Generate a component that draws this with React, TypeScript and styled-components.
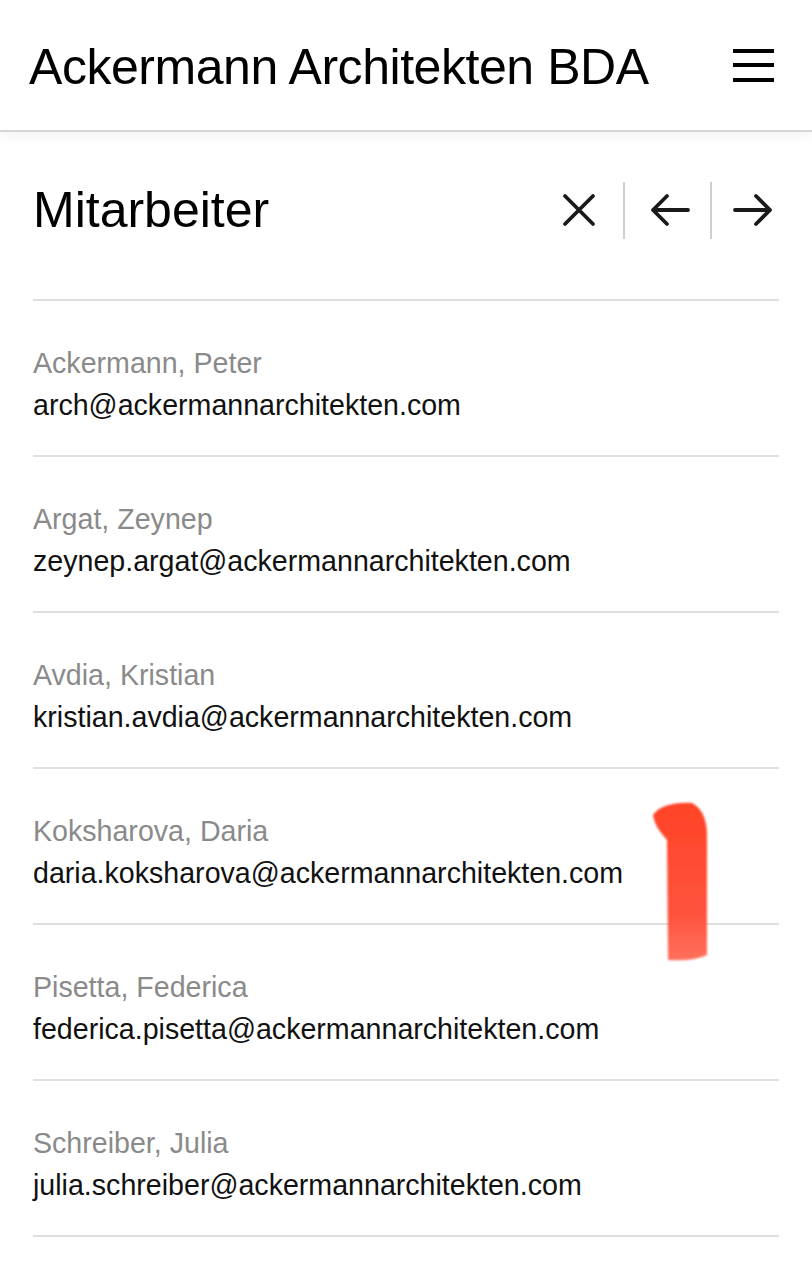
import React from 'react';
import styled, { createGlobalStyle } from 'styled-components';

const GlobalStyle = createGlobalStyle`
  html, body {
    margin: 0;
    padding: 0;
    background: #fff;
  }
  body {
    font-family: 'Liberation Sans', Arial, sans-serif;
    color: #111;
  }
`;

interface Person {
  name: string;
  email: string;
}

const people: Person[] = [
  { name: 'Ackermann, Peter', email: 'arch@ackermannarchitekten.com' },
  { name: 'Argat, Zeynep', email: 'zeynep.argat@ackermannarchitekten.com' },
  { name: 'Avdia, Kristian', email: 'kristian.avdia@ackermannarchitekten.com' },
  { name: 'Koksharova, Daria', email: 'daria.koksharova@ackermannarchitekten.com' },
  { name: 'Pisetta, Federica', email: 'federica.pisetta@ackermannarchitekten.com' },
  { name: 'Schreiber, Julia', email: 'julia.schreiber@ackermannarchitekten.com' },
];

const Page = styled.div`
  position: relative;
  width: 812px;
  min-height: 1280px;
  background: #fff;
  overflow: hidden;
`;

const Header = styled.header`
  height: 130px;
  display: flex;
  align-items: center;
  justify-content: space-between;
  padding: 0 38px 0 29px;
  border-bottom: 2px solid #d6d6d6;
  box-shadow: 0 4px 12px rgba(0, 0, 0, 0.05);
`;

const Brand = styled.h1`
  margin: 4px 0 0;
  font-weight: 400;
  font-size: 50px;
  letter-spacing: -0.45px;
  color: #000;
`;

const Burger = styled.button`
  width: 41px;
  height: 33px;
  padding: 0;
  border: none;
  background: none;
  display: flex;
  flex-direction: column;
  justify-content: space-between;
  span {
    display: block;
    height: 4px;
    background: #000;
  }
`;

const Section = styled.main`
  padding: 48px 33px 0 33px;
`;

const TitleRow = styled.div`
  display: flex;
  align-items: center;
  justify-content: space-between;
  height: 60px;
  margin-bottom: 59px;
`;

const Title = styled.h2`
  margin: 0;
  font-weight: 400;
  font-size: 50px;
  color: #000;
`;

const Controls = styled.div`
  display: flex;
  align-items: center;
  height: 58px;
  margin-right: 6px;
`;

const IconButton = styled.button`
  padding: 0;
  border: none;
  background: none;
  display: flex;
  align-items: center;
  justify-content: center;
  color: #1a1a1a;
`;

const Divider = styled.span<{ $before: number; $after: number }>`
  width: 2px;
  height: 57px;
  background: #cfcfcf;
  margin: 0 ${p => p.$after}px 0 ${p => p.$before}px;
`;

const List = styled.ul`
  list-style: none;
  margin: 0;
  padding: 0;
  border-top: 2px solid #e0e0e0;
  width: 746px;
`;

const Item = styled.li`
  height: 156px;
  box-sizing: border-box;
  padding-top: 44px;
  border-bottom: 2px solid #e0e0e0;
  display: flex;
  flex-direction: column;
  gap: 6px;
`;

const Name = styled.div`
  font-size: 28.6px;
  color: #8a8a8a;
  line-height: 36px;
`;

const Email = styled.div`
  font-size: 28.6px;
  color: #111;
  line-height: 36px;
`;

const Mark = styled.svg`
  position: absolute;
  left: 630px;
  top: 790px;
  width: 100px;
  height: 190px;
  pointer-events: none;
`;

const CloseIcon = () => (
  <svg width="34" height="34" viewBox="0 0 34 34" fill="none">
    <path d="M3 3l28 28M31 3L3 31" stroke="currentColor" strokeWidth="3.8" strokeLinecap="round" />
  </svg>
);

const ArrowIcon: React.FC<{ dir: 'left' | 'right' }> = ({ dir }) => (
  <svg width="40" height="34" viewBox="0 0 40 34" fill="none">
    {dir === 'left' ? (
      <path d="M38 17H3M17 3L3 17l14 14" stroke="currentColor" strokeWidth="3.8" strokeLinecap="round" strokeLinejoin="round" />
    ) : (
      <path d="M2 17h35M23 3l14 14-14 14" stroke="currentColor" strokeWidth="3.8" strokeLinecap="round" strokeLinejoin="round" />
    )}
  </svg>
);

const App: React.FC = () => {
  return (
    <Page>
      <GlobalStyle />
      <Header>
        <Brand>Ackermann Architekten BDA</Brand>
        <Burger aria-label="Menü">
          <span />
          <span />
          <span />
        </Burger>
      </Header>
      <Section>
        <TitleRow>
          <Title>Mitarbeiter</Title>
          <Controls>
            <IconButton aria-label="Schließen"><CloseIcon /></IconButton>
            <Divider $before={27} $after={25} />
            <IconButton aria-label="Zurück"><ArrowIcon dir="left" /></IconButton>
            <Divider $before={20} $after={21} />
            <IconButton aria-label="Weiter"><ArrowIcon dir="right" /></IconButton>
          </Controls>
        </TitleRow>
        <List>
          {people.map(p => (
            <Item key={p.email}>
              <Name>{p.name}</Name>
              <Email>{p.email}</Email>
            </Item>
          ))}
        </List>
      </Section>
      <Mark viewBox="0 0 100 190">
        <defs>
          <linearGradient id="stroke" x1="0" y1="0" x2="0" y2="1">
            <stop offset="0" stopColor="#ff3a1c" />
            <stop offset="0.7" stopColor="#ff4a33" />
            <stop offset="1" stopColor="#ff6a55" />
          </linearGradient>
          <filter id="soft" x="-20%" y="-20%" width="140%" height="140%">
            <feGaussianBlur stdDeviation="1.2" />
          </filter>
        </defs>
        <path
          d="M23 25 C30 14 50 12 62 13 C72 18 77 30 77 45 L77 165 C66 170 50 171 38 170 L37 50 C30 42 24 34 23 25 Z"
          fill="url(#stroke)"
          filter="url(#soft)"
          opacity="0.95"
        />
      </Mark>
    </Page>
  );
};

export default App;
